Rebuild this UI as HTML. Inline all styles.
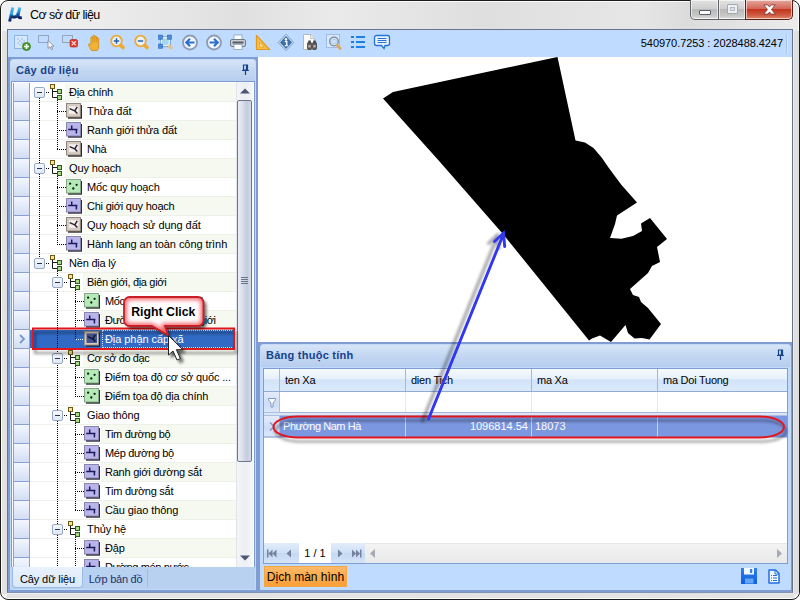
<!DOCTYPE html>
<html lang="vi"><head><meta charset="utf-8"><title>Cơ sở dữ liệu</title>
<style>
*{box-sizing:border-box}
html,body{margin:0;padding:0;width:800px;height:600px;overflow:hidden;background:#fff}
body{font-family:"Liberation Sans",sans-serif;font-size:11px;color:#000;position:relative}
.abs{position:absolute}
#win{position:absolute;left:0;top:0;width:800px;height:600px;border:1px solid #1c1c1c;border-radius:8px;background:linear-gradient(90deg,#f1f1f1,#ececec 12%,#e0e0e0 30%,#eaeaea 42%,#dfdfdf 60%,#e6e6e6 80%,#dcdcdc 86%,#ebebeb);box-shadow:inset 0 0 0 1px #fbfbfb}
#title{position:absolute;left:29px;top:7px;font-size:12.500px;letter-spacing:-0.55px;white-space:nowrap}
#client{position:absolute;left:7px;top:29px;width:786px;height:564px;border:1px solid #66758c;border-bottom-color:#7f93b8;background:#bfdbff}
#toolbar{position:absolute;left:0;top:0;width:784px;height:27px;background:#bfdbff}
#coords{position:absolute;right:9px;top:7px;font-size:11px;white-space:nowrap;letter-spacing:-0.06px}
#band{position:absolute;left:0;top:27px;width:784px;height:535px;background:#7f9cd3}
.panel{position:absolute;border:1px solid #c4dbf7;background:#bfdbff;border-radius:3px 3px 0 0;overflow:hidden}
.phead{position:absolute;left:0;top:0;right:0;height:22px;background:linear-gradient(#d6e4f7,#c3d7f2 50%,#b6cdee);color:#15428b;font-weight:bold;font-size:11px;line-height:21px;padding-left:5px;white-space:nowrap;letter-spacing:0.25px}
#tree{position:absolute;left:11px;top:81px;width:244px;height:486px;background:#fff;overflow:hidden;border-left:1px solid #7d9bd3;border-right:1px solid #7d9bd3;border-top:1px solid #7d9bd3}
.tx{position:absolute;height:19px;line-height:19px;white-space:nowrap;font-size:11px}
.ic{position:absolute}
.hd{position:absolute;height:1px;background-image:linear-gradient(90deg,#000 50%,transparent 50%);background-size:2px 1px}
.hd.w{background-image:linear-gradient(90deg,#fff 50%,transparent 50%)}
.vd{position:absolute;width:1px;background-image:linear-gradient(#000 50%,transparent 50%);background-size:1px 2px}
.exp{position:absolute;width:11px;height:11px;border:1px solid #97a8c4;border-radius:2px;background:linear-gradient(#f7f9fd,#dfe7f5);z-index:2}
.exp i{position:absolute;left:2px;top:4px;width:5px;height:1px;background:#2a3350}
.indc{position:absolute;left:1px;width:17px;height:19px;background:linear-gradient(#f3f6fd,#e3eaf9 50%,#d3def4);border-right:1px solid #8aa0d0;border-bottom:1px solid #8aa0d0;border-left:1px solid #8aa0d0}
.even{position:absolute;left:18px;width:206px;height:18px;background:#f5f9f0}
.rsep{position:absolute;left:18px;width:206px;height:1px;background:#eef1ea}
.selrow{position:absolute;height:18px;background:#316ac5}
.focus{position:absolute;height:18px;border:1px dotted #d6dff0;z-index:1}
.wb{border:1px solid #5f6368;border-top:none;background:linear-gradient(#e2e2e2,#cfcfcf 45%,#b9b9b9 50%,#c9c9c9 85%,#e4e4e4);box-shadow:inset 0 0 0 1px rgba(255,255,255,.6)}
.gh{top:0;height:22px;line-height:23px;padding-left:5px;letter-spacing:-0.25px;border-right:1px solid #9ebae0;font-size:11px;white-space:nowrap}
.gc{top:47px;height:21px;line-height:21px;padding:0 3px 0 3px;color:#fff;border-right:1px solid #c9d4f0;font-size:11px;white-space:nowrap}
</style></head><body>
<svg width="0" height="0" style="position:absolute">
<defs>
<g id="gi">
 <path d="M3.500 5v8.500h5M3.500 7.500h5" fill="none" stroke="#1a1a1a" stroke-width="1"/>
 <rect x="1.500" y="0.500" width="4" height="4" fill="#f6e59a" stroke="#6b5a10"/>
 <rect x="8.500" y="5.500" width="4" height="4" fill="#a9dc86" stroke="#2d5c1a"/>
 <rect x="8.500" y="11.500" width="4" height="4" fill="#a9dc86" stroke="#2d5c1a"/>
</g>
<g id="i-poly">
 <rect x="2" y="2" width="14" height="13.700" fill="#2e2927"/>
 <rect x="0.500" y="0.500" width="14" height="13.500" fill="#d6cbc2" stroke="#8f867f"/>
 <rect x="3" y="3.200" width="9.500" height="7.600" fill="#f6efed"/>
 <path d="M3.600 5.600l5.200 2.300 2.400-4M8.800 7.900l2.600 2.600" fill="none" stroke="#2a2630" stroke-width="1.500"/>
</g>
<g id="i-line">
 <rect x="2" y="2" width="14" height="13.700" fill="#2b2838"/>
 <rect x="0.500" y="0.500" width="14" height="13.500" fill="#b9b5ea" stroke="#8885b0"/>
 <path d="M2.200 7.500h9.200M5.700 3.500v4M10.400 7.500v4" fill="none" stroke="#1c1a5c" stroke-width="1.500"/>
</g>
<g id="i-pt">
 <rect x="2" y="2" width="14" height="13.700" fill="#27302a"/>
 <rect x="0.500" y="0.500" width="14" height="13.500" fill="#b5eab8" stroke="#86a888"/>
 <circle cx="4.100" cy="4.700" r="1.150" fill="#062006"/><circle cx="10.600" cy="5.800" r="1.150" fill="#062006"/><circle cx="7.300" cy="9.500" r="1.150" fill="#062006"/>
</g>
<g id="i-sel">
 <rect x="2" y="2" width="14" height="13.700" fill="#1a1f38"/>
 <rect x="0.500" y="0.500" width="14" height="13.500" fill="#d6cbc2" stroke="#9a918a"/>
 <rect x="2.500" y="2.500" width="10.500" height="9.500" fill="#44558c"/>
 <path d="M3.600 5.600l5.200 2.300 2.400-4M8.800 7.900l2.600 2.600" fill="none" stroke="#0d1438" stroke-width="1.500"/>
</g>
</defs></svg>

<div id="win">
 <div id="title">Cơ sở dữ liệu</div>
 <div class="abs" style="left:1px;top:30px;width:5px;height:563px;background:#e4e1e1"></div>
 <div class="abs" style="left:793px;top:30px;width:5px;height:563px;background:#dfdfdf"></div>
 <div class="abs" style="left:6px;top:593px;width:786px;height:4px;background:#e3e3e3"></div>
</div>

<div class="abs" id="wbtns" style="left:690px;top:0;width:103px;height:20px">
 <div class="abs wb" style="left:0;top:0;width:29px;height:20px;border-radius:0 0 0 5px;"><div class="abs" style="left:8px;top:10px;width:12px;height:5px;background:#fff;border:1px solid #555e6a;border-radius:1px"></div></div>
 <div class="abs wb" style="left:28px;top:0;width:28px;height:20px;"><div class="abs" style="left:8px;top:4px;width:11px;height:10px;border:1px solid #a3a9b1;background:#eef0f2;border-radius:1px"><div class="abs" style="left:2px;top:2px;width:5px;height:4px;border:1px solid #b4bac1;background:#dfe2e6"></div></div></div>
 <div class="abs wb" style="left:55px;top:0;width:48px;height:20px;border-radius:0 0 5px 0;background:linear-gradient(#e5a79d,#d4675a 45%,#c3351f 50%,#cf5b42 80%,#e08a6c);border-color:#5a1f17">
  <svg class="abs" style="left:17px;top:4px" width="13" height="11" viewBox="0 0 14 12"><path d="M0.800 1h4.400l1.800 2.200 1.800-2.200h4.400l-4 5 4 5h-4.400l-1.800-2.300-1.800 2.300h-4.400l4-5z" fill="#fff" stroke="#7a3a33" stroke-width="0.900"/></svg>
 </div>
</div>
<!-- app icon -->
<svg class="abs" style="left:7px;top:6px" width="17" height="17" viewBox="0 0 17 17">
 <defs><linearGradient id="mug" x1="0" y1="0" x2="0" y2="1"><stop offset="0" stop-color="#58c6f2"/><stop offset="0.5" stop-color="#1f7fc8"/><stop offset="1" stop-color="#0a1f5c"/></linearGradient></defs>
 <g fill="none" stroke="url(#mug)" stroke-width="3" stroke-linecap="butt">
  <path d="M5.800 1.300L2.600 15.500"/>
  <path d="M4.600 6.500C3.800 12.500 9.500 12.800 11.300 6.500"/>
  <path d="M12.800 1.300L11.200 8.500Q10.600 12.300 14.800 11.600"/>
 </g>
</svg>

<div id="client">
 <div id="toolbar"><div class="abs" style="left:778px;top:4px;width:1px;height:20px;background:#a9c5ec;box-shadow:1px 0 0 #d9e8fc"></div><div id="coords">540970.7253 : 2028488.4247</div></div>
 <div id="band"></div>
</div>


<svg class="abs" style="left:14px;top:34px" width="390" height="20" viewBox="0 0 390 20">
 <!-- 1 add layer -->
 <g transform="translate(0,0)">
  <rect x="0.5" y="1.5" width="13" height="13" fill="#d6e8fb" stroke="#8fb4e6"/>
  <path d="M3 4h2v2h-2zM7 4h2v2h-2zM5 6h2v2h-2zM9 6h2v2h-2zM3 8h2v2h-2zM7 8h2v2h-2zM5 10h2v2h-2z" fill="#b5d0f3"/>
  <circle cx="12.500" cy="12.500" r="4" fill="#4aa02c" stroke="#2f7a16" stroke-width="0.8"/>
  <path d="M12.500 10v5M10 12.500h5" stroke="#fff" stroke-width="1.600"/>
 </g>
 <!-- 2 select -->
 <g transform="translate(24,0)">
  <rect x="0.5" y="1.500" width="10" height="7" fill="none" stroke="#69717d" stroke-dasharray="1 1"/>
  <path d="M10 6.500v8l2-1.800 1.400 3.100 1.300-.6-1.400-3h2.600z" fill="#fdfdfd" stroke="#8a8f98" stroke-width="0.900"/>
 </g>
 <!-- 3 deselect -->
 <g transform="translate(48,0)">
  <rect x="0.5" y="1.500" width="10" height="7" fill="none" stroke="#69717d" stroke-dasharray="1 1"/>
  <rect x="8" y="5.500" width="7.500" height="7.500" rx="1.500" fill="#e0352b" stroke="#b52219" stroke-width="0.600"/>
  <path d="M9.700 7.200l4.200 4.200M13.900 7.200l-4.200 4.200" stroke="#ffd9d4" stroke-width="1.300"/>
 </g>
 <!-- 4 hand -->
 <g transform="translate(74.500,0)">
  <path d="M3 16.500c-1.500-2-2.800-4.300-3-6 .2-1.200 1.600-1 2.400.4V3.800c0-1.300 1.900-1.300 1.900 0V2.300c0-1.400 2-1.400 2 0v1c0-1.400 2-1.400 2 0v1.400c0-1.300 1.900-1.300 1.900 0v8c0 1.600-.6 2.800-1.300 3.800z" fill="#f3b234" stroke="#d08a12" stroke-width="0.800"/>
  <path d="M4.300 3.500v5M6.300 3v5.500M8.300 3.500v5" stroke="#c98614" stroke-width="0.700"/>
 </g>
 <!-- 5 zoom in -->
 <g transform="translate(96,0)">
  <path d="M10.500 11l2.500 2.500" stroke="#f0a830" stroke-width="3.600" stroke-linecap="round"/>
  <circle cx="6.500" cy="7" r="5.300" fill="#e8f2fc" stroke="#efa935" stroke-width="1.800"/>
  <path d="M6.500 4.300v5.400M3.800 7h5.400" stroke="#1f5fa8" stroke-width="1.400"/>
 </g>
 <!-- 6 zoom out -->
 <g transform="translate(120,0)">
  <path d="M10.500 11l2.500 2.500" stroke="#f0a830" stroke-width="3.600" stroke-linecap="round"/>
  <circle cx="6.500" cy="7" r="5.300" fill="#e8f2fc" stroke="#efa935" stroke-width="1.800"/>
  <path d="M3.800 7h5.400" stroke="#1f5fa8" stroke-width="1.400"/>
 </g>
 <!-- 7 zoom extent -->
 <g transform="translate(144,0)">
  <rect x="2.500" y="3" width="9.500" height="9.500" fill="none" stroke="#4a86d6" stroke-width="1.200"/>
  <path d="M11 11.500l2 2.300" stroke="#e6c08e" stroke-width="3.400" stroke-linecap="round"/>
  <circle cx="7.300" cy="7.700" r="4.200" fill="#a3d7f6" stroke="#eef0ea" stroke-width="1.300"/>
  <g fill="#4f8ad8" stroke="#2f66b8" stroke-width="0.500"><rect x="0.300" y="1" width="4.400" height="4.400"/><rect x="9.300" y="1" width="4.400" height="4.400"/><rect x="0.300" y="10" width="4.400" height="4.400"/></g>
 </g>
 <!-- 8 back -->
 <g transform="translate(168,0)">
  <circle cx="8" cy="8.500" r="7" fill="#f4f8fd" stroke="#8f9cb2" stroke-width="1.900"/>
  <path d="M12.500 8.500h-8M8 4.800L4.300 8.500 8 12.200" fill="none" stroke="#2a6fd0" stroke-width="2.200"/>
 </g>
 <!-- 9 forward -->
 <g transform="translate(192,0)">
  <circle cx="8" cy="8.500" r="7" fill="#f4f8fd" stroke="#8f9cb2" stroke-width="1.900"/>
  <path d="M3.500 8.500h8M8 4.800l3.700 3.700L8 12.200" fill="none" stroke="#2a6fd0" stroke-width="2.200"/>
 </g>
 <!-- 10 printer -->
 <g transform="translate(216,0)">
  <rect x="4" y="1" width="8" height="5" fill="#fff" stroke="#8aa0bd" stroke-width="0.800"/>
  <rect x="0.500" y="5.500" width="15" height="7" rx="1.500" fill="#c9ced6" stroke="#6f7b8c"/>
  <rect x="2.500" y="7.500" width="11" height="2" fill="#555c66"/>
  <rect x="4" y="10.500" width="8" height="5" fill="#fff" stroke="#8aa0bd" stroke-width="0.800"/>
 </g>
 <!-- 11 ruler -->
 <g transform="translate(240,0)">
  <path d="M2.500 1.500v14h13z" fill="#f6c04a" stroke="#e39a1b" stroke-width="1.200" stroke-linejoin="round"/>
  <path d="M5.500 8.500v4.500h4.800z" fill="#fbe3a6" stroke="#e39a1b" stroke-width="0.700"/>
 </g>
 <!-- 12 info -->
 <g transform="translate(264,0)">
  <path d="M8 1l7 7.500-7 7.500-7-7.500z" fill="#3f6fa8" stroke="#dfeaf8" stroke-width="1.200"/>
  <path d="M8 0.300l7.700 8.200-7.700 8.200-7.700-8.200z" fill="none" stroke="#4a77ad" stroke-width="0.700"/>
  <circle cx="8" cy="5.300" r="1.200" fill="#fff"/><path d="M6.800 7.500h2v4.200h1M6.800 11.700h1.200" stroke="#fff" stroke-width="1.300" fill="none"/>
 </g>
 <!-- 13 doc + binoculars -->
 <g transform="translate(288,0)">
  <path d="M1.500 0.500h7l4 4v11h-11z" fill="#fbfbfb" stroke="#b9b9b9"/>
  <path d="M8.500 0.500v4h4" fill="#eee" stroke="#b9b9b9" stroke-width="0.800"/>
  <rect x="5.500" y="8.500" width="4" height="7" rx="1" fill="#5a5a5a" stroke="#333" stroke-width="0.700"/>
  <rect x="10.500" y="8.500" width="4" height="7" rx="1" fill="#5a5a5a" stroke="#333" stroke-width="0.700"/>
  <rect x="6.300" y="6.500" width="2.500" height="2.500" fill="#444"/><rect x="11.300" y="6.500" width="2.500" height="2.500" fill="#444"/>
  <rect x="6.300" y="11" width="2.400" height="2.500" fill="#c9a7a0"/><rect x="11.300" y="11" width="2.400" height="2.500" fill="#c9a7a0"/>
 </g>
 <!-- 14 picture magnifier -->
 <g transform="translate(312,0)">
  <rect x="0.500" y="0.500" width="13" height="13" fill="#d7e8fa" stroke="#9dbde6"/>
  <circle cx="8" cy="7.500" r="4.300" fill="#cfe4f8" stroke="#7a8796" stroke-width="1.300"/>
  <circle cx="8" cy="7.500" r="2.300" fill="none" stroke="#a9c7e8" stroke-width="0.800"/>
  <path d="M11.500 11.500l2.500 2.800" stroke="#dba66a" stroke-width="3" stroke-linecap="round"/>
 </g>
 <!-- 15 list -->
 <g transform="translate(336,0)" fill="#1f7fe0">
  <rect x="1" y="2" width="3" height="2"/><rect x="6" y="2" width="9" height="2"/>
  <rect x="1" y="7" width="3" height="2"/><rect x="6" y="7" width="9" height="2"/>
  <rect x="1" y="12" width="3" height="2"/><rect x="6" y="12" width="9" height="2"/>
 </g>
 <!-- 16 comment -->
 <g transform="translate(360,0)">
  <path d="M2.500 1.500h11a2 2 0 0 1 2 2v6a2 2 0 0 1-2 2h-2.500l-1 3-2.500-3h-5a2 2 0 0 1-2-2v-6a2 2 0 0 1 2-2z" fill="#eaf3fd" stroke="#2473d6" stroke-width="1.300"/>
  <path d="M3.500 4.500h9M3.500 6.500h9M3.500 8.500h9" stroke="#2473d6" stroke-width="1"/>
 </g>
</svg>

<!-- left panel -->
<div class="panel" style="left:10px;top:59px;width:246px;height:531px">
 <div class="phead">Cây dữ liệu</div>
</div>
<div id="tree">
<div class="indc" style="top:1px"></div>
<div class="indc" style="top:20px"></div>
<div class="indc" style="top:39px"></div>
<div class="indc" style="top:58px"></div>
<div class="indc" style="top:77px"></div>
<div class="indc" style="top:96px"></div>
<div class="indc" style="top:115px"></div>
<div class="indc" style="top:134px"></div>
<div class="indc" style="top:153px"></div>
<div class="indc" style="top:172px"></div>
<div class="indc" style="top:191px"></div>
<div class="indc" style="top:210px"></div>
<div class="indc" style="top:229px"></div>
<div class="indc" style="top:248px"><svg width="7" height="10" viewBox="0 0 7 10" style="position:absolute;left:5px;top:4px"><path d="M1 1l4 4-4 4" fill="none" stroke="#7a96d0" stroke-width="1.800"/></svg></div>
<div class="indc" style="top:267px"></div>
<div class="indc" style="top:286px"></div>
<div class="indc" style="top:305px"></div>
<div class="indc" style="top:324px"></div>
<div class="indc" style="top:343px"></div>
<div class="indc" style="top:362px"></div>
<div class="indc" style="top:381px"></div>
<div class="indc" style="top:400px"></div>
<div class="indc" style="top:419px"></div>
<div class="indc" style="top:438px"></div>
<div class="indc" style="top:457px"></div>
<div class="indc" style="top:476px"></div>
<div class="even" style="top:1px;left:53px;width:171px"></div>
<div class="even" style="top:39px;left:71px;width:153px"></div>
<div class="even" style="top:77px;left:53px;width:171px"></div>
<div class="even" style="top:115px;left:71px;width:153px"></div>
<div class="even" style="top:153px;left:71px;width:153px"></div>
<div class="even" style="top:191px;left:71px;width:153px"></div>
<div class="even" style="top:229px;left:89px;width:135px"></div>
<div class="even" style="top:267px;left:71px;width:153px"></div>
<div class="even" style="top:305px;left:89px;width:135px"></div>
<div class="even" style="top:343px;left:89px;width:135px"></div>
<div class="even" style="top:381px;left:89px;width:135px"></div>
<div class="even" style="top:419px;left:89px;width:135px"></div>
<div class="even" style="top:457px;left:89px;width:135px"></div>
<div class="rsep" style="top:19px"></div>
<div class="rsep" style="top:38px"></div>
<div class="rsep" style="top:57px"></div>
<div class="rsep" style="top:76px"></div>
<div class="rsep" style="top:95px"></div>
<div class="rsep" style="top:114px"></div>
<div class="rsep" style="top:133px"></div>
<div class="rsep" style="top:152px"></div>
<div class="rsep" style="top:171px"></div>
<div class="rsep" style="top:190px"></div>
<div class="rsep" style="top:209px"></div>
<div class="rsep" style="top:228px"></div>
<div class="rsep" style="top:247px"></div>
<div class="rsep" style="top:266px"></div>
<div class="rsep" style="top:285px"></div>
<div class="rsep" style="top:304px"></div>
<div class="rsep" style="top:323px"></div>
<div class="rsep" style="top:342px"></div>
<div class="rsep" style="top:361px"></div>
<div class="rsep" style="top:380px"></div>
<div class="rsep" style="top:399px"></div>
<div class="rsep" style="top:418px"></div>
<div class="rsep" style="top:437px"></div>
<div class="rsep" style="top:456px"></div>
<div class="rsep" style="top:475px"></div>
<div class="rsep" style="top:494px"></div>
<div class="exp" style="left:22px;top:5px"><i></i></div>
<div class="hd" style="left:34px;top:10px;width:4px"></div>
<svg class="ic" style="left:37px;top:2px" width="14" height="17" viewBox="0 0 14 17"><use href="#gi"/></svg>
<div class="tx" style="left:57px;top:1px;letter-spacing:-0.28px">Địa chính</div>
<div class="hd" style="left:45px;top:29px;width:9px"></div>
<svg class="ic" style="left:54px;top:21px" width="16" height="16" viewBox="0 0 16 16"><use href="#i-poly"/></svg>
<div class="tx" style="left:75px;top:20px;letter-spacing:0.0px">Thửa đất</div>
<div class="hd" style="left:45px;top:48px;width:9px"></div>
<svg class="ic" style="left:54px;top:40px" width="16" height="16" viewBox="0 0 16 16"><use href="#i-line"/></svg>
<div class="tx" style="left:75px;top:39px;letter-spacing:-0.09px">Ranh giới thửa đất</div>
<div class="hd" style="left:45px;top:67px;width:9px"></div>
<svg class="ic" style="left:54px;top:59px" width="16" height="16" viewBox="0 0 16 16"><use href="#i-poly"/></svg>
<div class="tx" style="left:75px;top:58px;letter-spacing:-0.23px">Nhà</div>
<div class="exp" style="left:22px;top:81px"><i></i></div>
<div class="hd" style="left:34px;top:86px;width:4px"></div>
<svg class="ic" style="left:37px;top:78px" width="14" height="17" viewBox="0 0 14 17"><use href="#gi"/></svg>
<div class="tx" style="left:57px;top:77px;letter-spacing:-0.12px">Quy hoạch</div>
<div class="hd" style="left:45px;top:105px;width:9px"></div>
<svg class="ic" style="left:54px;top:97px" width="16" height="16" viewBox="0 0 16 16"><use href="#i-pt"/></svg>
<div class="tx" style="left:75px;top:96px;letter-spacing:-0.15px">Mốc quy hoạch</div>
<div class="hd" style="left:45px;top:124px;width:9px"></div>
<svg class="ic" style="left:54px;top:116px" width="16" height="16" viewBox="0 0 16 16"><use href="#i-line"/></svg>
<div class="tx" style="left:75px;top:115px;letter-spacing:-0.23px">Chi giới quy hoạch</div>
<div class="hd" style="left:45px;top:143px;width:9px"></div>
<svg class="ic" style="left:54px;top:135px" width="16" height="16" viewBox="0 0 16 16"><use href="#i-poly"/></svg>
<div class="tx" style="left:75px;top:134px;letter-spacing:-0.06px">Quy hoạch sử dụng đất</div>
<div class="hd" style="left:45px;top:162px;width:9px"></div>
<svg class="ic" style="left:54px;top:154px" width="16" height="16" viewBox="0 0 16 16"><use href="#i-line"/></svg>
<div class="tx" style="left:75px;top:153px;letter-spacing:-0.06px">Hành lang an toàn công trình</div>
<div class="exp" style="left:22px;top:176px"><i></i></div>
<div class="hd" style="left:34px;top:181px;width:4px"></div>
<svg class="ic" style="left:37px;top:173px" width="14" height="17" viewBox="0 0 14 17"><use href="#gi"/></svg>
<div class="tx" style="left:57px;top:172px;letter-spacing:-0.2px">Nền địa lý</div>
<div class="exp" style="left:40px;top:195px"><i></i></div>
<div class="hd" style="left:52px;top:200px;width:4px"></div>
<svg class="ic" style="left:55px;top:192px" width="14" height="17" viewBox="0 0 14 17"><use href="#gi"/></svg>
<div class="tx" style="left:75px;top:191px;letter-spacing:-0.32px">Biên giới, địa giới</div>
<div class="hd" style="left:63px;top:219px;width:9px"></div>
<svg class="ic" style="left:72px;top:211px" width="16" height="16" viewBox="0 0 16 16"><use href="#i-pt"/></svg>
<div class="tx" style="left:93px;top:210px;letter-spacing:-0.45px">Mốc biên giới, địa giới</div>
<div class="hd" style="left:63px;top:238px;width:9px"></div>
<svg class="ic" style="left:72px;top:230px" width="16" height="16" viewBox="0 0 16 16"><use href="#i-line"/></svg>
<div class="tx" style="left:93px;top:229px;letter-spacing:-0.46px">Đường biên giới, địa giới</div>
<div class="hd" style="left:63px;top:257px;width:9px"></div>
<div class="selrow" style="left:18px;top:248px;width:204px"></div>
<div class="focus" style="left:90px;top:248px;width:132px"></div>
<div class="vd" style="left:63px;top:248px;height:9px;background-image:linear-gradient(#dfe6f5 50%,transparent 50%)"></div>
<div class="hd w" style="left:64px;top:257px;width:8px"></div>
<svg class="ic" style="left:72px;top:249px" width="16" height="16" viewBox="0 0 16 16"><use href="#i-sel"/></svg>
<div class="tx" style="left:93px;top:248px;color:#fff;letter-spacing:-0.07px">Địa phận cấp xã</div>
<div class="exp" style="left:40px;top:271px"><i></i></div>
<div class="hd" style="left:52px;top:276px;width:4px"></div>
<svg class="ic" style="left:55px;top:268px" width="14" height="17" viewBox="0 0 14 17"><use href="#gi"/></svg>
<div class="tx" style="left:75px;top:267px;letter-spacing:-0.38px">Cơ sở đo đạc</div>
<div class="hd" style="left:63px;top:295px;width:9px"></div>
<svg class="ic" style="left:72px;top:287px" width="16" height="16" viewBox="0 0 16 16"><use href="#i-pt"/></svg>
<div class="tx" style="left:93px;top:286px;letter-spacing:-0.16px">Điểm tọa độ cơ sở quốc ...</div>
<div class="hd" style="left:63px;top:314px;width:9px"></div>
<svg class="ic" style="left:72px;top:306px" width="16" height="16" viewBox="0 0 16 16"><use href="#i-pt"/></svg>
<div class="tx" style="left:93px;top:305px;letter-spacing:-0.18px">Điểm tọa độ địa chính</div>
<div class="exp" style="left:40px;top:328px"><i></i></div>
<div class="hd" style="left:52px;top:333px;width:4px"></div>
<svg class="ic" style="left:55px;top:325px" width="14" height="17" viewBox="0 0 14 17"><use href="#gi"/></svg>
<div class="tx" style="left:75px;top:324px;letter-spacing:-0.13px">Giao thông</div>
<div class="hd" style="left:63px;top:352px;width:9px"></div>
<svg class="ic" style="left:72px;top:344px" width="16" height="16" viewBox="0 0 16 16"><use href="#i-line"/></svg>
<div class="tx" style="left:93px;top:343px;letter-spacing:-0.32px">Tim đường bộ</div>
<div class="hd" style="left:63px;top:371px;width:9px"></div>
<svg class="ic" style="left:72px;top:363px" width="16" height="16" viewBox="0 0 16 16"><use href="#i-line"/></svg>
<div class="tx" style="left:93px;top:362px;letter-spacing:-0.32px">Mép đường bộ</div>
<div class="hd" style="left:63px;top:390px;width:9px"></div>
<svg class="ic" style="left:72px;top:382px" width="16" height="16" viewBox="0 0 16 16"><use href="#i-line"/></svg>
<div class="tx" style="left:93px;top:381px;letter-spacing:-0.24px">Ranh giới đường sắt</div>
<div class="hd" style="left:63px;top:409px;width:9px"></div>
<svg class="ic" style="left:72px;top:401px" width="16" height="16" viewBox="0 0 16 16"><use href="#i-line"/></svg>
<div class="tx" style="left:93px;top:400px;letter-spacing:-0.26px">Tim đường sắt</div>
<div class="hd" style="left:63px;top:428px;width:9px"></div>
<svg class="ic" style="left:72px;top:420px" width="16" height="16" viewBox="0 0 16 16"><use href="#i-line"/></svg>
<div class="tx" style="left:93px;top:419px;letter-spacing:-0.1px">Cầu giao thông</div>
<div class="exp" style="left:40px;top:442px"><i></i></div>
<div class="hd" style="left:52px;top:447px;width:4px"></div>
<svg class="ic" style="left:55px;top:439px" width="14" height="17" viewBox="0 0 14 17"><use href="#gi"/></svg>
<div class="tx" style="left:75px;top:438px;letter-spacing:-0.09px">Thủy hệ</div>
<div class="hd" style="left:63px;top:466px;width:9px"></div>
<svg class="ic" style="left:72px;top:458px" width="16" height="16" viewBox="0 0 16 16"><use href="#i-line"/></svg>
<div class="tx" style="left:93px;top:457px;letter-spacing:-0.1px">Đập</div>
<div class="hd" style="left:63px;top:485px;width:9px"></div>
<svg class="ic" style="left:72px;top:477px" width="16" height="16" viewBox="0 0 16 16"><use href="#i-line"/></svg>
<div class="tx" style="left:93px;top:476px;letter-spacing:-0.35px">Đường mép nước</div>
<div class="vd" style="left:45px;top:18px;height:50px"></div>
<div class="vd" style="left:45px;top:94px;height:69px"></div>
<div class="vd" style="left:45px;top:189px;height:306px"></div>
<div class="vd" style="left:63px;top:208px;height:50px"></div>
<div class="vd" style="left:63px;top:284px;height:31px"></div>
<div class="vd" style="left:63px;top:341px;height:88px"></div>
<div class="vd" style="left:63px;top:455px;height:40px"></div>
<div class="vd" style="left:27px;top:16px;height:65px"></div>
<div class="vd" style="left:27px;top:92px;height:84px"></div>
</div>


<!-- pin left -->
<svg class="abs" style="left:241px;top:64px" width="9" height="11" viewBox="0 0 9 11"><path d="M2.500 1h4v5h-4zM5.500 1v5M1 6.500h7M4.500 7v4" fill="none" stroke="#15428b" stroke-width="1.200"/></svg>
<!-- scrollbar -->
<div class="abs" style="left:236px;top:82px;width:17px;height:485px;background:linear-gradient(90deg,#f3f5f8,#eceff3 50%,#f6f7f9);border-left:1px solid #e1e5ea"></div>
<svg class="abs" style="left:240px;top:88px" width="10" height="6" viewBox="0 0 10 6"><path d="M0 5.500L5 0.500l5 5z" fill="#4c5676"/></svg>
<div class="abs" style="left:237px;top:100px;width:15px;height:362px;border:1px solid #6b768c;border-radius:2px;background:linear-gradient(90deg,#eceff5,#d9deea 35%,#c3cbdf 70%,#d6dbe8)"></div>
<div class="abs" style="left:241px;top:277px;width:7px;height:1px;background:#6a748a;box-shadow:0 2px 0 #6a748a,0 4px 0 #6a748a,0 6px 0 #6a748a"></div>
<svg class="abs" style="left:240px;top:555px" width="10" height="6" viewBox="0 0 10 6"><path d="M0 0.500h10L5 5.500z" fill="#4c5676"/></svg>
<!-- tabs -->
<div class="abs" style="left:11px;top:567px;width:244px;height:22px;background:#b9d1f1"></div>
<div class="abs" style="left:12px;top:567px;width:71px;height:21px;border:1px solid #9dbbe6;border-top:none;border-radius:0 0 4px 4px;background:linear-gradient(#e9f1fc,#d9e8fb);line-height:24px;text-align:center;font-size:11px;letter-spacing:-0.1px">Cây dữ liệu</div>
<div class="abs" style="left:84px;top:569px;width:64px;height:18px;line-height:20px;text-align:center;font-size:11px;color:#17356f;border-right:1px solid #9dbbe6;letter-spacing:-0.25px">Lớp bản đồ</div>

<!-- map -->
<div class="abs" id="map" style="left:258px;top:57px;width:534px;height:285px;background:#fff"></div>


<svg class="abs" style="left:258px;top:57px" width="534" height="285" viewBox="258 57 534 285">
<polygon fill="#000" points="383,98.500 393,92 557.500,57 575.500,140.500 585,142.500 593.500,148 602,158 608.500,167.500 621.500,185 637,202.500 617,215.500 615,224 610,238 621.500,238.700 633,236 642,231 641,223.500 650,218 667,239 657,247 660,262 652,266 648,273 630,289 633,295 639,297 641,302 648,308 661,324 649.500,339.500 642,338 634.500,338.500 628,333 625.500,325 611,342 600,335.500 592,338.500 589,340.500 545,286 502.500,233.500 440,162"/>
</svg>

<!-- bottom panel -->
<div class="panel" style="left:260px;top:344px;width:531px;height:246px">
 <div class="phead">Bảng thuộc tính</div>
</div>


<svg class="abs" style="left:776px;top:349px" width="9" height="11" viewBox="0 0 9 11"><path d="M2.500 1h4v5h-4zM5.500 1v5M1 6.500h7M4.500 7v4" fill="none" stroke="#15428b" stroke-width="1.200"/></svg>
<div class="abs" id="grid" style="left:263px;top:368px;width:525px;height:196px;background:#fff;border:1px solid #7f9fd3;overflow:hidden">
 <div class="abs" style="left:0;top:0;width:524px;height:23px;background:linear-gradient(#f6faff,#e6f0fc 45%,#d3e3f8 50%,#dbe9fb);border-bottom:1px solid #8fabd9"></div>
 <div class="abs gh" style="left:0;width:16px"></div>
 <div class="abs gh" style="left:16px;width:126px">ten Xa</div>
 <div class="abs gh" style="left:142px;width:126px">dien Tich</div>
 <div class="abs gh" style="left:268px;width:126px">ma Xa</div>
 <div class="abs gh" style="left:394px;width:130px;">ma Doi Tuong</div>
 <!-- filter row -->
 <div class="abs" style="left:0;top:23px;width:16px;height:21px;background:linear-gradient(#e4ecfb,#cfdcf5 60%,#dde7f9);border-right:1px solid #a9bfe4;border-bottom:1px solid #a9bfe4"></div>
 <svg class="abs" style="left:4px;top:29px" width="8" height="10" viewBox="0 0 8 10"><path d="M0.500 0.500h7v1.500l-2.500 3v4h-2v-4l-2.500-3z" fill="#fff" stroke="#6b8fc4" stroke-width="0.900"/></svg>
 <div class="abs" style="left:16px;top:43px;width:508px;height:1px;background:#9fb5dc"></div>
 <div class="abs" style="left:141px;top:23px;width:1px;height:20px;background:#e3eaf3"></div>
 <div class="abs" style="left:267px;top:23px;width:1px;height:20px;background:#e3eaf3"></div>
 <div class="abs" style="left:393px;top:23px;width:1px;height:20px;background:#e3eaf3"></div>
 <div class="abs" style="left:0;top:44px;width:524px;height:3px;background:#dde6f2;border-bottom:1px solid #a9bfe4"></div>
 <!-- data row -->
 <div class="abs" style="left:0;top:47px;width:16px;height:21px;background:linear-gradient(#e4ecfb,#cfdcf5 60%,#dde7f9);border-right:1px solid #a9bfe4;border-bottom:1px solid #a9bfe4"></div>
 <svg class="abs" style="left:5px;top:53px" width="7" height="9" viewBox="0 0 7 9"><path d="M1 0.500l4 4-4 4" fill="none" stroke="#7f9bd0" stroke-width="1.500"/></svg>
 <div class="abs" style="left:16px;top:47px;width:507px;height:21px;background:#7b97e0"></div>
 <div class="abs gc" style="left:16px;width:126px;letter-spacing:-0.45px">Phường Nam Hà</div>
 <div class="abs gc" style="left:142px;width:126px;text-align:right">1096814.54</div>
 <div class="abs gc" style="left:268px;width:126px">18073</div>
 <div class="abs gc" style="left:394px;width:129px;border-right:none"></div>
 <div class="abs" style="left:0;top:68px;width:524px;height:1px;background:#b8c9e6"></div>
 <!-- pager -->
 <div class="abs" style="left:0;top:174px;width:524px;height:20px;background:linear-gradient(#f3f3f3,#e9e9e9);border-top:1px solid #e6e6e6"></div>
 <div class="abs" style="left:0;top:174px;width:101px;height:20px;background:linear-gradient(#e3edfa,#cddff6 50%,#c3d8f3 52%,#d5e4f8)"></div>
 <div class="abs" style="left:35px;top:174px;width:32px;height:20px;background:#fff;line-height:20px;text-align:center;font-size:11px;white-space:nowrap">1 / 1</div>
 <svg class="abs" style="left:-1px;top:175px" width="524" height="19" viewBox="0 0 524 19">
  <g fill="#74829c">
   <path d="M4 5.500h1.500v8h-1.500zM9.500 5.500v8l-4-4zM13.500 5.500v8l-4-4z"/>
   <path d="M28 5.500v8l-4.500-4z"/>
   <path d="M75 5.500v8l4.500-4z"/>
   <path d="M89 5.500v8l4-4zM93 5.500v8l4-4zM97 5.500h1.500v8h-1.500z"/>
  </g>
  <path d="M112 5v9l-5-4.500z" fill="#a4abb6"/>
  <path d="M514 5v9l5-4.500z" fill="#a4abb6"/>
 </svg>
</div>
<!-- bottom bar -->
<div class="abs" style="left:264px;top:566px;width:83px;height:21px;background:linear-gradient(#fdbb6c,#fba94a 50%,#fba03a);border:1px solid #f5a442;font-size:12px;line-height:21px;text-align:center;white-space:nowrap">Dịch màn hình</div>
<svg class="abs" style="left:741px;top:568px" width="16" height="16" viewBox="0 0 16 16">
 <defs><linearGradient id="svg1" x1="0" y1="0" x2="0" y2="1"><stop offset="0" stop-color="#2f7fee"/><stop offset="1" stop-color="#0f5fe0"/></linearGradient></defs>
 <path d="M0 0h16v16h-16z" fill="url(#svg1)"/>
 <rect x="3" y="0" width="10" height="6.500" fill="#f4f8ff"/><rect x="9" y="1" width="2.200" height="4" fill="#2f7fee"/>
 <rect x="4" y="10.500" width="8.500" height="5" fill="#62a6f4"/>
</svg>
<svg class="abs" style="left:768px;top:569px" width="12" height="15" viewBox="0 0 12 15">
 <path d="M1 1h6.500l3.500 3.500v9.500h-10z" fill="#f4f8ff" stroke="#1f6fe0" stroke-width="1.500" stroke-linejoin="round"/>
 <path d="M7 1v4h4" fill="none" stroke="#1f6fe0" stroke-width="1"/>
 <path d="M3 6.500h1M5 6.500h4M3 9h1M5 9h4M3 11.500h1M5 11.500h4" stroke="#1f6fe0" stroke-width="1.200"/>
</svg>
<svg class="abs" style="left:0;top:0;z-index:50" width="800" height="600" viewBox="0 0 800 600">
 <defs>
  <filter id="sh" x="-20%" y="-20%" width="150%" height="160%"><feGaussianBlur in="SourceAlpha" stdDeviation="1.800"/><feOffset dx="3" dy="3"/><feComponentTransfer><feFuncA type="linear" slope="0.550"/></feComponentTransfer><feMerge><feMergeNode/><feMergeNode in="SourceGraphic"/></feMerge></filter>
  <filter id="sh2" x="-5%" y="-30%" width="110%" height="180%"><feGaussianBlur in="SourceAlpha" stdDeviation="1.500"/><feOffset dx="2" dy="4"/><feComponentTransfer><feFuncA type="linear" slope="0.450"/></feComponentTransfer><feMerge><feMergeNode/><feMergeNode in="SourceGraphic"/></feMerge></filter>
  <filter id="sh3" x="-30%" y="-10%" width="160%" height="120%"><feGaussianBlur in="SourceAlpha" stdDeviation="1.800"/><feOffset dx="-6" dy="2"/><feComponentTransfer><feFuncA type="linear" slope="0.400"/></feComponentTransfer><feMerge><feMergeNode/><feMergeNode in="SourceGraphic"/></feMerge></filter>
  <path id="cpath" d="M129.500 297h68.500a5.500 5.500 0 0 1 5.500 5.500v18a5.500 5.500 0 0 1-5.500 5.500h-33l3 9-16.500-9h-22a5.500 5.500 0 0 1-5.500-5.500v-18a5.500 5.500 0 0 1 5.500-5.500z"/>
  <clipPath id="ccl"><path d="M129.500 297h68.500a5.500 5.500 0 0 1 5.500 5.500v18a5.500 5.500 0 0 1-5.500 5.500h-33l3 9-16.500-9h-22a5.500 5.500 0 0 1-5.500-5.500v-18a5.500 5.500 0 0 1 5.500-5.500z"/></clipPath>
  <filter id="glow" x="-20%" y="-30%" width="140%" height="170%"><feGaussianBlur stdDeviation="1.900"/></filter>
  <radialGradient id="cg" cx="50%" cy="50%" r="65%"><stop offset="0.55" stop-color="#fff"/><stop offset="1" stop-color="#f6b3b0"/></radialGradient>
 </defs>
 <!-- red rect around tree row -->
 <rect x="33" y="328.500" width="201" height="20.500" fill="none" stroke="#e0191f" stroke-width="2" filter="url(#sh2)"/>
 <!-- ellipse around data row -->
 <rect x="273.500" y="416.500" width="510.500" height="21" rx="24" ry="10.500" fill="none" stroke="#e0191f" stroke-width="2" filter="url(#sh2)"/>
 <!-- blue arrow -->
 <g filter="url(#sh3)"><path d="M428.500 419L503.500 234M494.500 241.500l9-8.500 1.200 13.500" fill="none" stroke="#3037ee" stroke-width="2.900" stroke-linecap="round"/></g>
 <!-- callout -->
 <g filter="url(#sh)"><use href="#cpath" fill="#fff"/></g>
 <g clip-path="url(#ccl)"><use href="#cpath" fill="none" stroke="#f0343c" stroke-width="5.500" filter="url(#glow)" opacity="0.800"/></g>
 <use href="#cpath" fill="none" stroke="#c81e26" stroke-width="1.800"/>
 <text x="163.300" y="315.700" text-anchor="middle" font-family="Liberation Sans, sans-serif" font-weight="bold" font-size="12.300" fill="#000">Right Click</text>
 <!-- cursor -->
 <g filter="url(#sh)"><path d="M168.500 335.500v19.500l4.500-4 4 9 3.400-1.500-4-8.800h6.200z" fill="#fff" stroke="#222" stroke-width="1"/></g>
</svg>

</body></html>
